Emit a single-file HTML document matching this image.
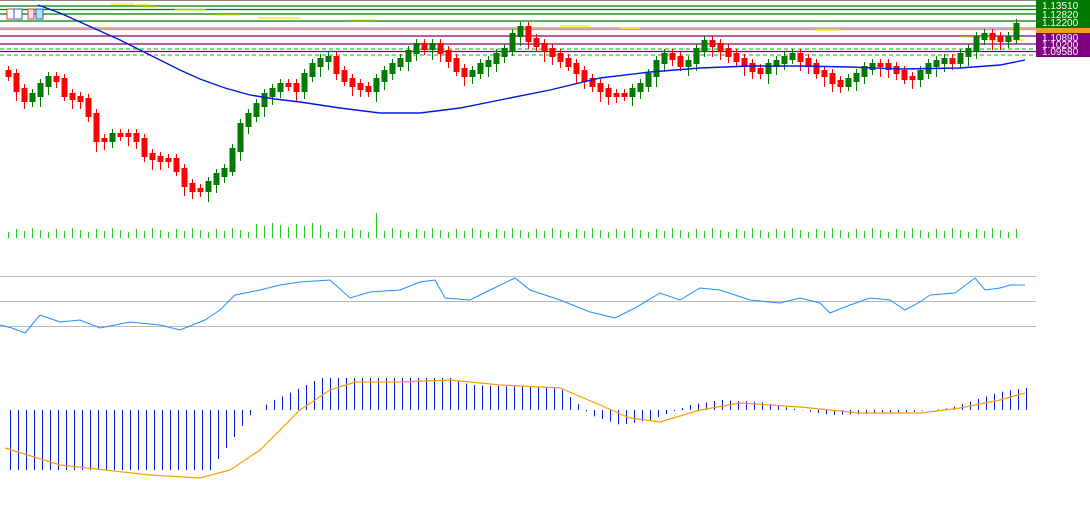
<!DOCTYPE html>
<html><head><meta charset="utf-8"><style>
html,body{margin:0;padding:0;background:#fff;width:1090px;height:510px;overflow:hidden;font-family:"Liberation Sans",sans-serif}
svg{display:block}
</style></head><body>
<svg id="s" width="1090" height="510" xmlns="http://www.w3.org/2000/svg">
<rect x="0" y="0" width="1090" height="1" fill="#888"/>
<g stroke-width="1.3">
<line x1="0" y1="6" x2="1036" y2="6" stroke="#007a00"/>
<line x1="0" y1="9.5" x2="1036" y2="9.5" stroke="#007a00"/>
<line x1="0" y1="14" x2="1036" y2="14" stroke="#007a00"/>
<line x1="0" y1="21" x2="1036" y2="21" stroke="#007a00"/>
<line x1="0" y1="28" x2="1036" y2="28" stroke="#999"/>
<line x1="0" y1="29.5" x2="1036" y2="29.5" stroke="#f0a020"/>
<line x1="0" y1="36" x2="1036" y2="36" stroke="#800080"/>
<line x1="0" y1="44" x2="1036" y2="44" stroke="#800080"/>
<line x1="0" y1="49" x2="1036" y2="49" stroke="#3c3" stroke-dasharray="4,3"/>
<line x1="0" y1="51.5" x2="1036" y2="51.5" stroke="#800080"/>
<line x1="0" y1="55" x2="1036" y2="55" stroke="#3c3" stroke-dasharray="4,3"/>
</g>
<g stroke="#ee0" stroke-width="1.3">
<line x1="111" y1="4" x2="134" y2="4"/><line x1="134" y1="5" x2="150" y2="5"/>
<line x1="143" y1="7" x2="158" y2="7"/><line x1="175" y1="10" x2="206" y2="10"/>
<line x1="215" y1="15" x2="240" y2="15"/><line x1="258" y1="18" x2="300" y2="18"/>
<line x1="350" y1="20" x2="375" y2="20"/><line x1="560" y1="26" x2="590" y2="26"/>
<line x1="620" y1="28" x2="640" y2="28"/><line x1="815" y1="30" x2="840" y2="30"/>
<line x1="960" y1="37" x2="990" y2="37"/><line x1="990" y1="40" x2="1025" y2="40"/>
</g>
<g>
<rect x="7" y="9" width="8" height="10" fill="#fff" stroke="#d44" stroke-width="1"/>
<rect x="14" y="9" width="8" height="10" fill="#fff" stroke="#26c" stroke-width="1"/>
<rect x="28" y="9" width="6" height="10" fill="#fde" stroke="#d44" stroke-width="1"/>
<rect x="36" y="9" width="7" height="10" fill="#bdf" stroke="#26c" stroke-width="1"/>
</g>
<g id="c"></g>
<polyline fill="none" stroke="#0018e0" stroke-width="1.4" points="38,5 60,13 80,22 100,31 120,40 140,50 160,60 180,70 200,79 225,88 250,95 275,99 300,102 340,108 380,113 420,113 460,108 500,100 550,90 600,78 650,72 700,68 750,66 800,66 850,67 900,69 960,68 1000,65 1025,60"/>
<line x1="0" y1="276.5" x2="1036" y2="276.5" stroke="#bbb"/>
<line x1="0" y1="301.5" x2="1036" y2="301.5" stroke="#bbb"/>
<line x1="0" y1="326.5" x2="1036" y2="326.5" stroke="#bbb"/>
<polyline fill="none" stroke="#1e90ff" stroke-width="1" points="0,325 12,328 25,333 40,315 60,322 80,320 100,328 130,322 160,325 180,330 205,320 220,310 235,295 260,290 280,285 300,282 330,280 350,298 370,292 400,290 420,282 435,280 445,298 470,300 490,290 515,278 530,290 560,300 590,312 615,318 635,308 660,293 680,300 700,288 720,290 750,300 780,303 800,298 820,303 830,313 850,305 870,298 890,300 905,310 920,302 930,295 955,293 975,278 985,290 1000,288 1010,285 1025,285"/>
<g id="m"></g>
<polyline fill="none" stroke="#f5a000" stroke-width="1.2" points="5,448 60,465 150,475 200,478 230,470 260,450 300,410 330,390 355,382 400,382 450,380 500,385 560,388 600,405 630,418 660,422 700,410 740,403 800,407 860,413 920,413 960,408 1000,400 1025,393"/>
<g font-size="10" fill="#fff">
<rect x="1036" y="0" width="54" height="28" fill="#007a00"/>
<text x="1042" y="9">1.13510</text><text x="1042" y="18">1.12820</text><text x="1042" y="26">1.12200</text>
<rect x="1036" y="28" width="54" height="5" fill="#f0a020"/>
<rect x="1036" y="33" width="54" height="24" fill="#800080"/>
<text x="1042" y="41">1.10890</text><text x="1042" y="48">1.10200</text><text x="1042" y="55">1.09580</text>
</g>
</svg>
<script>
(function(){
var ys=[75,90,100,95,85,78,80,95,98,100,115,140,140,135,135,135,140,155,158,160,160,170,185,190,190,183,175,170,150,125,115,105,95,90,85,85,90,75,65,60,58,72,80,85,88,90,80,72,65,60,52,45,48,45,52,60,70,75,72,65,62,55,50,35,28,40,45,50,55,60,65,72,80,85,90,95,95,95,90,85,75,62,55,58,65,62,50,42,45,50,55,60,65,70,72,65,62,58,55,60,65,72,75,82,85,80,75,68,65,65,68,72,78,78,72,65,62,60,62,55,50,38,35,38,40,38,25];
var c=document.getElementById('c'),m=document.getElementById('m'),h='';
function hist(x){var p=[[0,-60],[210,-60],[250,-5],[270,8],[300,22],[320,32],[450,32],[470,25],[560,22],[590,-5],[620,-15],[650,-10],[690,5],[720,10],[760,8],[800,0],[830,-5],[900,-3],[950,2],[1000,18],[1025,22]];
for(var i=1;i<p.length;i++){if(x<=p[i][0]){var t=(x-p[i-1][0])/(p[i][0]-p[i-1][0]);return p[i-1][1]+t*(p[i][1]-p[i-1][1]);}}return 22;}
for(var i=0;i<ys.length;i++){var x=8+i*8+0.5,o=i?ys[i-1]:ys[0]-3,cl=ys[i];var up=cl<o;var col=up?'#007a00':'#f00';
var tp=Math.min(o,cl)-2,bt=Math.max(o,cl)+2;if(bt-tp<2)bt=tp+2;
h+='<line x1="'+x+'" y1="'+(tp-4-(i*7%7))+'" x2="'+x+'" y2="'+(bt+4+(i*5%7))+'" stroke="'+col+'"/>';
h+='<rect x="'+(x-3)+'" y="'+tp+'" width="6" height="'+(bt-tp)+'" fill="'+col+'"/>';
var vh=6+(i*13%5)+(i==46?16:0)+(i>30&&i<40?5:0);
h+='<line x1="'+x+'" y1="'+(238-vh)+'" x2="'+x+'" y2="238" stroke="#2c2"/>';}
c.innerHTML=h;var mh='';
for(var x=10;x<=1026;x+=8){var v=hist(x);mh+='<line x1="'+(x+0.5)+'" y1="410" x2="'+(x+0.5)+'" y2="'+(410-v)+'" stroke="#0018e0" stroke-width="1"/>';}
m.innerHTML=mh;
})();
</script>
</body></html>
